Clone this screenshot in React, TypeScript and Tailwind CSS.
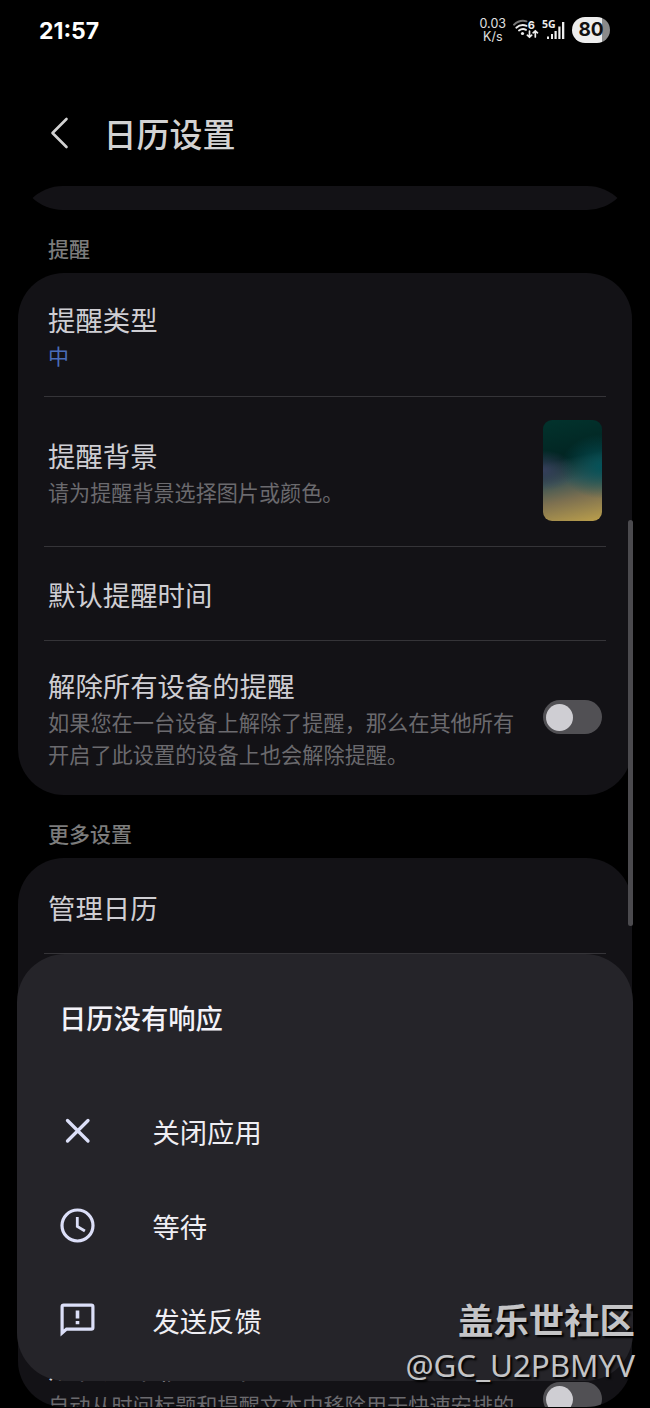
import type { ReactNode } from "react";

function WifiIcon() {
  return (
    <svg width="27" height="22" viewBox="0 0 27 22" fill="none" stroke="#ededed" strokeWidth="1.9" strokeLinecap="round">
      <path d="M2 5.700C6 1.900 11 1.300 14.500 2.300" stroke="#777" />
      <path d="M4.300 8.700C7.200 6.100 11 5.500 14.500 6.800" />
      <path d="M7 11.500C9 10 12 9.700 14 10.800" />
      <circle cx="10.500" cy="14.500" r="1.600" fill="#ededed" stroke="none" />
      <text x="15.800" y="9.700" fill="#ededed" stroke="none" className="font-['Inter'] text-[11px] font-bold">6</text>
      <path d="M17.500 12v6M15.300 16.200l2.200 2 2.200-2M23.300 18v-6M21.100 13.800l2.200-2 2.200 2" strokeWidth="1.700" />
    </svg>
  );
}

function SignalIcon() {
  return (
    <svg width="24" height="22" viewBox="0 0 24 22" fill="#ededed" className="overflow-visible">
      <text x="0" y="8.700" className="font-['Open_Sans'] text-[10.500px] font-bold">5G</text>
      <rect x="5" y="17.500" width="2" height="2.500" />
      <rect x="9" y="15" width="2" height="5" />
      <rect x="12.500" y="12" width="2.200" height="8" />
      <rect x="16.300" y="7.500" width="2.200" height="12.500" />
      <rect x="20" y="3" width="2.300" height="17" />
    </svg>
  );
}

function StatusBar() {
  return (
    <div className="flex h-[60px] items-center justify-between pl-[39px] pr-10 font-['Inter','Noto_Sans_CJK_SC',sans-serif]">
      <span className="mt-[2px] text-[23px] font-bold text-white">21:57</span>
      <div className="flex items-center">
        <div className="mr-[6px] text-center text-[12.500px] leading-[13.500px] text-[#e0e0e0]">
          <p>0.03</p>
          <p>K/s</p>
        </div>
        <WifiIcon />
        <span className="w-[3px]" />
        <SignalIcon />
        <span className="ml-[6px] flex h-[26px] w-[38px] items-center justify-center rounded-full bg-linear-to-r from-[#ededed] from-80% to-[#8a8a8a] to-80% text-[19px] font-bold text-[#111]">
          80
        </span>
      </div>
    </div>
  );
}

function Toggle() {
  return (
    <div className="flex h-[34px] w-[59px] shrink-0 items-center rounded-full bg-[#515054] pl-[3px]">
      <div className="size-[27px] rounded-full bg-[#cfced3]" />
    </div>
  );
}

function Divider() {
  return <div className="mx-[26px] -mt-px h-px bg-[#353438]" />;
}

function Title({ children }: { children: ReactNode }) {
  return <p className="text-[27.400px] leading-9 text-[#cfced3]">{children}</p>;
}

function SectionLabel({ children }: { children: ReactNode }) {
  return <h2 className="pl-12 text-[21px] leading-8 font-medium text-[#7c7c7c]">{children}</h2>;
}

const actions = [
  {
    label: "关闭应用",
    icon: <path d="M7.500 7.500 28 28M28 7.500 7.500 28" strokeWidth="3.300" strokeLinecap="round" />,
  },
  {
    label: "等待",
    icon: (
      <>
        <circle cx="17.500" cy="17.500" r="15.500" strokeWidth="3.200" />
        <path d="M17.300 9V18.500l7.600 4.500" strokeWidth="2.800" />
      </>
    ),
  },
  {
    label: "发送反馈",
    icon: (
      <>
        <path d="M2.100 31V4.700Q2.100 3.100 3.700 3.100H31.300Q32.900 3.100 32.900 4.700V25.500Q32.900 27.100 31.300 27.100H6.500Z" strokeWidth="3.200" />
        <path d="M17.500 8.500v8M17.500 19v3.300" strokeWidth="3.600" />
      </>
    ),
  },
];

function NotRespondingSheet() {
  return (
    <div className="absolute top-[954px] left-[17px] h-[427px] w-[616px] rounded-[48px] bg-[#252429]">
      <h3 className="mt-[45px] ml-[42px] text-[27.300px] leading-9 font-medium text-[#f3f2f8]">日历没有响应</h3>
      <div className="mt-[49px]">
        {actions.map((a) => (
          <div key={a.label} className="flex h-[94.500px] items-center">
            <svg width="36" height="36" viewBox="0 0 36 36" fill="none" stroke="#dcdff8" className="ml-[42.500px]">
              {a.icon}
            </svg>
            <span className="ml-[57px] text-[27.300px] leading-9 text-[#efeef3]">{a.label}</span>
          </div>
        ))}
      </div>
    </div>
  );
}

export default function App() {
  return (
    <div className="relative h-[1408px] w-[650px] overflow-hidden bg-black font-['Noto_Sans_CJK_SC',sans-serif]" lang="zh-CN">
      <StatusBar />

      <header className="flex h-[126px] items-center pl-[50px] pb-[1px]">
        <svg width="19" height="32" viewBox="0 0 19 32" fill="none" stroke="#d2d2d2" strokeWidth="2.600" strokeLinecap="round" strokeLinejoin="round" className="mt-5">
          <path d="M16.500 2 2.500 16 16.500 30" />
        </svg>
        <h1 className="mt-[21px] ml-[34.500px] text-[33px] leading-[44px] font-medium text-[#d2d2d2]">日历设置</h1>
      </header>

      {/* tail of the card scrolled under the header */}
      <div className="mx-[18px] h-[60px] overflow-hidden rounded-t-[45px]">
        <div className="-mt-9 h-[60px] rounded-b-[45px] bg-[#131216]" />
      </div>

      <div className="-mt-[14px]">
        <SectionLabel>提醒</SectionLabel>
      </div>

      <section className="mx-[18px] mt-[9px] h-[522px] rounded-[46px] bg-[#131216]">
        <div className="flex h-[124px] flex-col pt-[28px] pl-[30px]">
          <Title>提醒类型</Title>
          <p className="mt-[2px] text-[21px] leading-8 text-[#4a6db8]">中</p>
        </div>
        <Divider />
        <div className="flex h-[150px] items-center justify-between pr-[30px] pl-[30px]">
          <div>
            <Title>提醒背景</Title>
            <p className="mt-[3px] text-[21.100px] leading-8 text-[#6b6a6e]">请为提醒背景选择图片或颜色。</p>
          </div>
          <div className="mb-[3px] h-[101px] w-[59px] rounded-[9px] bg-[radial-gradient(ellipse_70%_32%_at_100%_46%,#045259_0%,transparent_100%),radial-gradient(ellipse_55%_20%_at_0%_50%,#363f5c_0%,transparent_100%),linear-gradient(168deg,#02332d_0%,#022422_38%,#3f5654_58%,#7d7050_75%,#b49a4c_97%)]" />
        </div>
        <Divider />
        <div className="flex h-[94px] items-center pb-px pl-[30px]">
          <Title>默认提醒时间</Title>
        </div>
        <Divider />
        <div className="flex h-[156px] items-center justify-between pr-[30px] pb-[1px] pl-[30px]">
          <div>
            <Title>解除所有设备的提醒</Title>
            <p className="mt-[3px] w-[480px] text-[21.200px] leading-8 text-[#6b6a6e]">
              如果您在一台设备上解除了提醒，那么在其他所有
              <br />
              开启了此设置的设备上也会解除提醒。
            </p>
          </div>
          <div className="mb-[3px]">
            <Toggle />
          </div>
        </div>
      </section>

      <div className="mt-[22px]">
        <SectionLabel>更多设置</SectionLabel>
      </div>

      <section className="mx-[18px] mt-[9px] h-[549px] overflow-hidden rounded-[46px] bg-[#131216]">
        <div className="flex h-24 items-center pt-[2px] pl-[30px]">
          <Title>管理日历</Title>
        </div>
        <Divider />
        <div className="mt-[395px] flex h-[155px] justify-between pr-[30px] pl-[30px]">
          <div>
            <Title>从标题中移除时间</Title>
            <p className="mt-[4px] w-[480px] text-[21.200px] leading-8 text-[#6b6a6e]">自动从时间标题和提醒文本中移除用于快速安排的</p>
          </div>
          <div className="mt-[33px]">
            <Toggle />
          </div>
        </div>
      </section>

      <div className="absolute top-[520px] left-[628px] h-[406px] w-[5px] rounded-full bg-[#4b4a4e]" />

      <NotRespondingSheet />

      <div className="absolute right-[15px] bottom-[22px] text-right text-[#c4c4c6] [text-shadow:2px_2px_2px_#000]">
        <p className="text-[35.400px] leading-[50px] font-bold">盖乐世社区</p>
        <p className="font-['Noto_Sans',sans-serif] text-[31.300px] leading-[42px]">@GC_U2PBMYV</p>
      </div>
    </div>
  );
}
